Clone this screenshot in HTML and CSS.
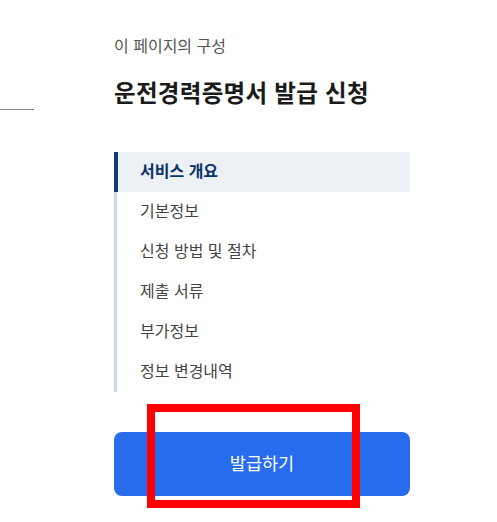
FILE: index.html
```html
<!DOCTYPE html>
<html lang="ko">
<head>
<meta charset="utf-8">
<link rel="stylesheet" href="styles.css">
</head>
<body>
<div class="page">
  <div class="side"><div class="side-line"></div></div>
  <main class="toc">
    <p class="toc-label">이 페이지의 구성</p>
    <h1 class="toc-title">운전경력증명서 발급 신청</h1>
    <ul class="toc-list">
      <li class="toc-item active">서비스 개요</li>
      <li class="toc-item">기본정보</li>
      <li class="toc-item">신청 방법 및 절차</li>
      <li class="toc-item">제출 서류</li>
      <li class="toc-item">부가정보</li>
      <li class="toc-item">정보 변경내역</li>
    </ul>
    <button class="issue-btn" type="button">발급하기</button>
  </main>
</div>
<div class="highlight"></div>
</body>
</html>
```

FILE: styles.css
```css
* { box-sizing: border-box; }
html, body { margin: 0; padding: 0; background: #fff; }
body {
  font-family: "Noto Sans CJK KR", "Noto Sans", sans-serif;
  width: 497px;
  height: 522px;
  overflow: hidden;
}
.page {
  display: flex;
}
.side {
  width: 34px;
  padding-top: 109px;
}
.side-line {
  height: 0;
  border-top: 1px solid #8a8a8a;
}
.toc {
  margin-left: 80px;
  width: 296px;
  padding-top: 34px;
}
.toc-label {
  margin: 0;
  font-size: 16px;
  line-height: 22px;
  color: #555;
  font-weight: 400;
}
.toc-title {
  margin: 20px 0 0;
  font-size: 23.5px;
  line-height: 32px;
  padding-bottom: 2px;
  font-weight: 700;
  color: #1b1b1b;
  letter-spacing: 0.3px;
}
.toc-list {
  list-style: none;
  margin: 42px 0 0;
  padding: 0;
  border-left: 3px solid #cfd8e6;
}
.toc-item {
  height: 40px;
  display: flex;
  align-items: center;
  padding-left: 23px;
  padding-bottom: 4px;
  font-size: 16px;
  color: #444;
}
.toc-item.active {
  background: #edf0f5;
  color: #0b326b;
  font-weight: 700;
  margin-left: -3px;
  border-left: 4px solid #0a3a7a;
  padding-left: 22px;
}
.issue-btn {
  display: block;
  margin-top: 40px;
  width: 296px;
  height: 64px;
  border: 0;
  border-radius: 8px;
  background: #266cec;
  color: #fff;
  font-family: inherit;
  font-size: 17.5px;
  font-weight: 400;
  padding: 0 0 3px;
}
.highlight {
  position: absolute;
  left: 147px;
  top: 404px;
  width: 213px;
  height: 104px;
  border: 8px solid #ff0000;
}
```
